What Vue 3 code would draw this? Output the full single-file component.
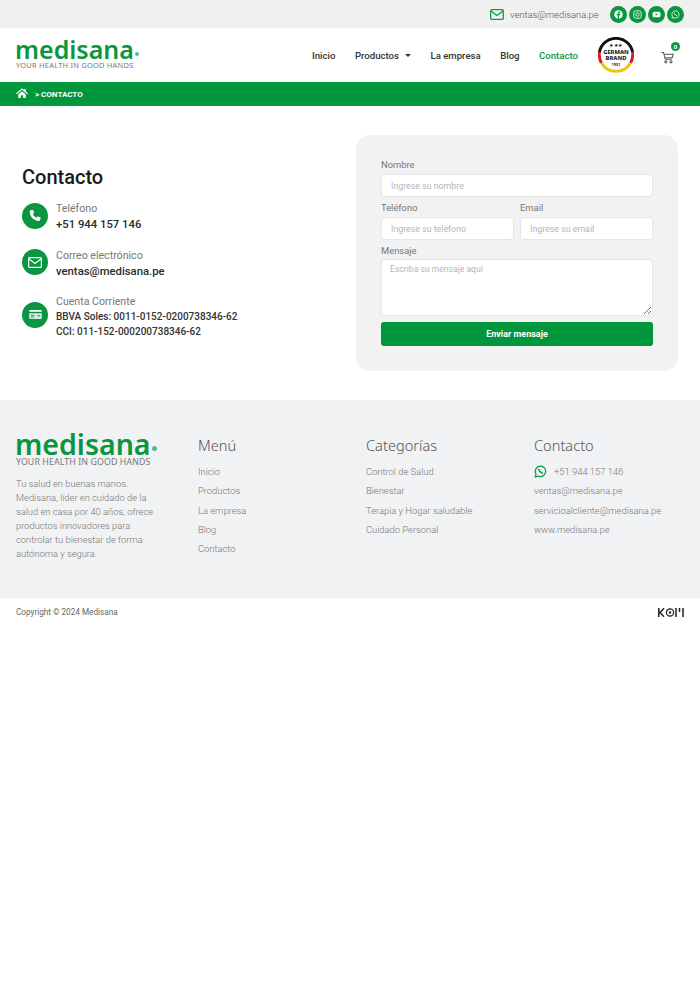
<script setup>
const menu = ['Inicio', 'Productos', 'La empresa', 'Blog', 'Contacto']
const cats = ['Control de Salud', 'Bienestar', 'Terapia y Hogar saludable', 'Cuidado Personal']
const mails = ['ventas@medisana.pe', 'servicioalcliente@medisana.pe', 'www.medisana.pe']
const wa = 'M8 1.5a6.4 6.4 0 0 0-5.5 9.7L1.6 14.500l3.400-.9A6.4 6.400 0 1 0 8 1.500z'
</script>

<template>
  <div class="page">
    <div class="topbar">
      <svg class="mail" viewBox="0 0 14 11" width="14" height="11"><rect x=".7" y=".7" width="12.600" height="9.600" rx="1" fill="none" stroke="#0d9a46" stroke-width="1.300"/><path d="M1 2l6 4.500L13 2" fill="none" stroke="#0d9a46" stroke-width="1.300"/></svg>
      <span class="topmail">ventas@medisana.pe</span>
      <div class="socials">
        <span class="soc"><svg viewBox="0 0 16 16" width="10" height="10"><circle cx="8" cy="8" r="7.500" fill="#fff"/><path d="M9 16V9.500h2l.4-2.300H9V6c0-.8.3-1.200 1.200-1.200h1.200V2.800C11 2.700 10.400 2.600 9.800 2.600 7.900 2.600 6.700 3.700 6.700 5.700v1.500H4.600v2.300h2.100V16z" fill="#0a9641"/></svg></span>
        <span class="soc"><svg viewBox="0 0 16 16" width="10" height="10" fill="none" stroke="#fff" stroke-width="1.500"><rect x="1.500" y="1.500" width="13" height="13" rx="3.500"/><circle cx="8" cy="8" r="3"/></svg></span>
        <span class="soc"><svg viewBox="0 0 16 16" width="10" height="10"><rect x="1" y="3" width="14" height="10" rx="3" fill="#fff"/><path d="M6.500 5.800v4.400L10.300 8z" fill="#0a9641"/></svg></span>
        <span class="soc"><svg viewBox="0 0 16 16" width="10" height="10"><path :d="wa" fill="none" stroke="#fff" stroke-width="1.400"/><path d="M5.800 5c1 3 2.200 4.300 5 5.300" fill="none" stroke="#fff" stroke-width="1.500"/></svg></span>
      </div>
    </div>

    <header class="header">
      <div class="logo">
        <div class="logoword">medisana<i class="dot"></i></div>
        <div class="tag">YOUR HEALTH IN GOOD HANDS</div>
      </div>
      <nav class="nav">
        <a>Inicio</a>
        <a class="prod">Productos <b class="caret"></b></a>
        <a>La empresa</a>
        <a>Blog</a>
        <a class="active">Contacto</a>
      </nav>
      <svg class="badge" viewBox="0 0 36 36" width="36" height="36">
        <circle cx="18" cy="18" r="17.500" fill="#fff"/>
        <path d="M1.500 15A16.800 16.800 0 0 1 34.500 15" fill="none" stroke="#111" stroke-width="3"/>
        <path d="M1.500 15A16.800 16.800 0 0 0 3.500 26M34.500 15A16.800 16.800 0 0 1 32.500 26" fill="none" stroke="#d4202a" stroke-width="3"/>
        <path d="M3.500 26A16.800 16.800 0 0 0 32.500 26" fill="none" stroke="#f3c313" stroke-width="3"/>
        <text x="18" y="10" class="bs">★★★</text>
        <text x="18" y="16.500" class="bt">GERMAN</text>
        <text x="18" y="22.500" class="bt">BRAND</text>
        <text x="18" y="29" class="by">1951</text>
      </svg>
      <div class="cart">
        <svg viewBox="0 0 14 14" width="13" height="13" fill="none" stroke="#555" stroke-width="1.100"><path d="M.5 1.500h2.200l1.900 7.500h7"/><path d="M3.200 3.500h10l-1.200 3.800H4.200"/><circle cx="5.200" cy="11.700" r="1.100"/><circle cx="10.800" cy="11.700" r="1.100"/></svg>
        <span class="count">0</span>
      </div>
    </header>

    <div class="crumb">
      <svg viewBox="0 0 16 13" width="12" height="10"><path d="M8 0l3 2.500V1h2v3.200L16 7l-1 1-7-6-7 6-1-1zM3 8.500L8 4l5 4.500V13H9.500V9.500h-3V13H3z" fill="#fff"/></svg>
      <span>&gt; CONTACTO</span>
    </div>

    <main class="main">
      <section class="info">
        <h1>Contacto</h1>
        <div class="item">
          <span class="ic up1"><svg viewBox="0 0 16 16" width="14" height="14"><path d="M3.500 1.200L5.800 1l1.300 3.200-1.500 1.400c.7 1.900 2.300 3.500 4.200 4.300l1.400-1.600 3.200 1.400-.3 2.400c-.2 1-1 1.700-2 1.600C6.300 13.200 2.500 9 2 3.400c-.1-1 .5-2 1.500-2.200z" fill="#fff"/></svg></span>
          <div><div class="lbl">Teléfono</div><div class="val">+51 944 157 146</div></div>
        </div>
        <div class="item second">
          <span class="ic up2"><svg viewBox="0 0 14 11" width="14" height="11"><rect x=".6" y=".6" width="12.800" height="9.800" rx="1" fill="none" stroke="#fff" stroke-width="1.200"/><path d="M1 2l6 4.500L13 2" fill="none" stroke="#fff" stroke-width="1.200"/></svg></span>
          <div><div class="lbl">Correo electrónico</div><div class="val">ventas@medisana.pe</div></div>
        </div>
        <div class="item">
          <span class="ic up2"><svg viewBox="0 0 14 10" width="13" height="9"><path d="M0 1a1 1 0 0 1 1-1h12a1 1 0 0 1 1 1v1H0z" fill="#fff"/><path d="M0 3.500h14V9a1 1 0 0 1-1 1H1a1 1 0 0 1-1-1z" fill="#cfeedd"/><path d="M2 6h4M2 8h3M9 6.500h3" stroke="#0a9641"/></svg></span>
          <div><div class="lbl">Cuenta Corriente</div><div class="sm">BBVA Soles: 0011-0152-0200738346-62</div><div class="sm">CCI: 011-152-000200738346-62</div></div>
        </div>
      </section>

      <form class="card" @submit.prevent>
        <label class="f">Nombre<input placeholder="Ingrese su nombre"></label>
        <div class="two">
          <label class="f">Teléfono<input placeholder="Ingrese su teléfono"></label>
          <label class="f">Email<input placeholder="Ingrese su email"></label>
        </div>
        <label class="f">Mensaje<textarea placeholder="Escriba su mensaje aquí"></textarea></label>
        <button type="submit">Enviar mensaje</button>
      </form>
    </main>

    <footer class="foot">
      <div class="c1">
        <div class="logoword big">medisana<i class="dot"></i></div>
        <div class="tag bigtag">YOUR HEALTH IN GOOD HANDS</div>
        <p>Tu salud en buenas manos. Medisana, líder en cuidado de la salud en casa por 40 años, ofrece productos innovadores para controlar tu bienestar de forma autónoma y segura.</p>
      </div>
      <div class="c2">
        <h3>Menú</h3>
        <a v-for="m in menu" :key="m">{{ m }}</a>
      </div>
      <div class="c2">
        <h3>Categorías</h3>
        <a v-for="c in cats" :key="c">{{ c }}</a>
      </div>
      <div class="c2">
        <h3>Contacto</h3>
        <a class="wa"><svg viewBox="0 0 16 16" width="13" height="13"><path :d="wa" fill="none" stroke="#0d9a46" stroke-width="1.500"/><path d="M5.600 4.800c.8 3 2.400 4.700 5.400 5.500" fill="none" stroke="#0d9a46" stroke-width="1.800"/></svg>+51 944 157 146</a>
        <a v-for="m in mails" :key="m">{{ m }}</a>
      </div>
    </footer>

    <div class="copy">
      <span>Copyright © 2024 Medisana</span>
      <svg viewBox="0 0 26 9" width="26" height="9">
        <path d="M.8 0v9M6 .3L2 4.500 6 8.700" fill="none" stroke="#222" stroke-width="1.500"/>
        <circle cx="12" cy="4.500" r="3.600" fill="none" stroke="#222" stroke-width="1.200"/><circle cx="12" cy="4.500" r="1.200" fill="#222"/>
        <path d="M18 0v9M21.500 0v4M25 0v9" stroke="#222" stroke-width="1.500"/>
      </svg>
    </div>
  </div>
</template>

<style>
html, body { margin: 0; background: #fff; }
</style>

<style scoped>
.page { width: 700px; font-family: Roboto, "Liberation Sans", sans-serif; color: #333; }
.topbar { height: 28px; background: #f0f0f0; display: flex; align-items: center; justify-content: flex-end; padding: 0 16px; box-sizing: border-box; }
.mail { margin-right: 6px; }
.topmail { font-size: 9.400px; font-weight: 300; color: #555; margin-right: 11.500px; }
.socials { display: flex; gap: 2px; }
.soc { width: 17px; height: 17px; border-radius: 50%; background: #0a9641; display: flex; align-items: center; justify-content: center; }
.soc svg { width: 9px; height: 9px; }
.header { height: 54px; background: #fff; display: flex; align-items: center; padding: 0 16px; box-sizing: border-box; }
.logo { width: 296px; flex: none; margin-bottom: 2px; }
.logoword { font-family: "Noto Sans", sans-serif; font-weight: 600; color: #0a9641; font-size: 25px; line-height: 21px; display: flex; align-items: flex-end; margin-left: -1px; }
.dot { width: 4px; height: 4px; border-radius: 50%; background: #5bb884; margin: 0 0 4px 1px; }
.tag { font-family: "Noto Sans", sans-serif; font-size: 7.500px; line-height: 9px; color: #777; letter-spacing: .2px; margin-top: 1px; }
.nav { display: flex; gap: 19.500px; font-size: 9.600px; font-weight: 500; color: #333; align-items: center; }
.nav a { white-space: nowrap; }
.prod { display: flex; align-items: center; gap: 6px; }
.caret { width: 0; height: 0; border: 3.500px solid transparent; border-top: 3.500px solid #333; border-bottom: 0; }
.active { color: #0a9641; }
.badge { margin-left: 20px; flex: none; }
.bs { font-size: 5px; text-anchor: middle; fill: #222; letter-spacing: .4px; }
.bt { font-size: 5.800px; font-weight: 800; text-anchor: middle; fill: #222; font-family: "Noto Sans", sans-serif; }
.by { font-size: 4px; font-weight: 700; text-anchor: middle; fill: #222; }
.cart { position: relative; margin-left: 27px; width: 14px; height: 13px; }
.count { position: absolute; top: -7px; right: -5px; width: 9px; height: 9px; border-radius: 50%; background: #0a9641; color: #fff; font-size: 6px; font-weight: 700; line-height: 9px; text-align: center; }
.crumb { height: 24px; background: #00963c; display: flex; align-items: center; gap: 7px; padding: 0 16px; color: #fff; font-size: 8px; font-weight: 700; box-sizing: border-box; }
.crumb svg { margin-top: -3px; }
.crumb span { margin-top: 1px; }
.main { display: flex; align-items: center; justify-content: space-between; padding: 29px 22px; }
.info { width: 300px; padding-bottom: 2px; }
h1 { margin: 0 0 12px; font-size: 20px; line-height: 24px; font-weight: 500; color: #1a1a1a; }
.item { display: flex; gap: 8px; align-items: center; margin-bottom: 15px; }
.second { margin-bottom: 14px; }
.item:last-child { margin-bottom: 0; }
.ic { width: 26px; height: 26px; border-radius: 50%; background: #0a9641; display: flex; align-items: center; justify-content: center; flex: none; }
.up1 { margin-bottom: 2px; }
.up2 { margin-bottom: 4px; }
.lbl { font-size: 10.600px; line-height: 15px; color: #777; font-weight: 400; }
.val { font-size: 11.300px; line-height: 17px; font-weight: 500; color: #2b2b2b; }
.sm { font-size: 10px; line-height: 15px; font-weight: 500; color: #333; }
.card { width: 322px; height: 236px; box-sizing: border-box; background: #f2f2f2; border-radius: 14px; padding: 24px 25px; display: flex; flex-direction: column; gap: 5px; }
.f { display: flex; flex-direction: column; gap: 4px; font-size: 9.400px; line-height: 11px; color: #777; flex: 1 1 0; }
.card > .f { flex: none; }
input, textarea { font-family: inherit; font-size: 8.800px; box-sizing: border-box; border: 1px solid #e6e6e6; border-radius: 3px; background: #fff; color: #333; outline: none; width: 100%; }
input { height: 23px; padding: 0 9px; }
textarea { height: 57px; margin-top: -1px; padding: 4px 8px; display: block; font-size: 8.600px; }
input::placeholder, textarea::placeholder { color: #b5b5b5; opacity: 1; }
.two { display: flex; gap: 6px; }
button { margin-top: 1px; height: 24px; border: 0; border-radius: 3px; background: #00963c; color: #fff; font-family: inherit; font-size: 9px; font-weight: 700; }
.foot { height: 198px; background: #f0f2f3; box-sizing: border-box; padding: 33px 16px 0; display: flex; }
.c1 { width: 182px; flex: none; }
.big { font-size: 28.500px; line-height: 22px; }
.big .dot { width: 5px; height: 5px; margin-bottom: 4px; }
.bigtag { font-size: 8.800px; line-height: 10px; letter-spacing: .1px; margin-top: 2px; }
.c1 p { margin: 10px 0 0; width: 142px; font-size: 9.350px; line-height: 14px; font-weight: 300; color: #777; }
.c2 { width: 168px; flex: none; display: flex; flex-direction: column; }
h3 { margin: 0 0 5px; font-family: "Noto Sans", sans-serif; font-size: 14.600px; line-height: 24px; font-weight: 300; color: #555; }
.c2 a { font-size: 9.400px; line-height: 19.300px; font-weight: 300; color: #777; white-space: nowrap; }
.wa { display: flex; align-items: center; gap: 7px; }
.copy { height: 28px; display: flex; align-items: center; justify-content: space-between; padding: 0 16px; font-size: 8.200px; color: #666; box-sizing: border-box; }
</style>
